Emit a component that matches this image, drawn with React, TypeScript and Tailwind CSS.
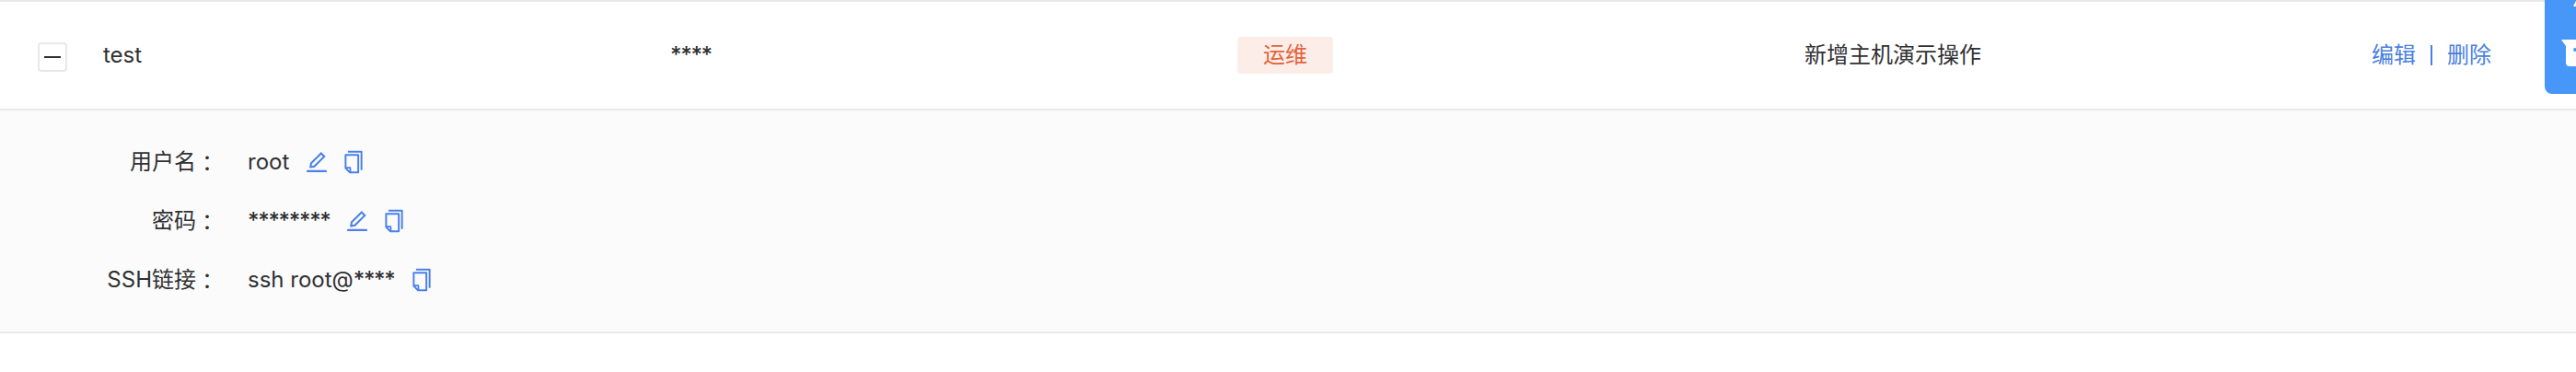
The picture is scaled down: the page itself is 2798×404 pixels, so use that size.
import React from "react";
import { AiOutlineCopy, AiOutlineEdit } from "react-icons/ai";

type Detail = { label: string; value: string; masked: string; editable: boolean };

const details: Detail[] = [
  { label: "用户名", value: "root", masked: "", editable: true },
  { label: "密码", value: "", masked: "********", editable: true },
  { label: "SSH链接", value: "ssh root@", masked: "****", editable: false },
];

function Masked({ children }: { children: string }) {
  return <span className="font-medium tracking-[-1.3px]">{children}</span>;
}

function DetailRow({ label, value, masked, editable }: Detail) {
  return (
    <div className="flex h-16 items-center">
      <div className="flex w-[237px] justify-end whitespace-nowrap">
        <span>{label}</span>
        <span className="font-['Noto_Sans_CJK_TC',sans-serif]">{"\uFF1A"}</span>
      </div>
      <span className="ml-8 whitespace-nowrap">
        {value}
        {masked && <Masked>{masked}</Masked>}
      </span>
      <span className="ml-[15.5px] flex gap-3 text-[28px] text-[#4a80ec]">
        {editable && <AiOutlineEdit />}
        <AiOutlineCopy />
      </span>
    </div>
  );
}

export default function App() {
  return (
    <div className="relative h-[404px] w-full overflow-hidden bg-white font-['Inter','Noto_Sans_CJK_SC',sans-serif] text-[24px] leading-[36px] text-[#303133]">
      <div className="flex h-[120px] items-center border-y-2 border-[#e8e8e8]">
        <div className="flex w-[112px] pl-[41px] pt-1">
          <button className="flex size-8 items-center justify-center rounded-[4px] border-2 border-[#e8e8e8] bg-white">
            <span className="h-0.5 w-[18px] bg-[#303133]" />
          </button>
        </div>
        <div className="w-[616px]">test</div>
        <div className="w-[616px]">
          <Masked>****</Masked>
        </div>
        <div className="w-[616px]">
          <span className="flex h-10 w-[104px] items-center justify-center rounded-[4px] bg-[#fdede8] text-[#e2643c]">运维</span>
        </div>
        <div className="w-[616px]">新增主机演示操作</div>
        <div className="flex items-center whitespace-nowrap text-[#4a80e0]">
          <span>编辑</span>
          <span className="mx-4 h-[22px] w-0.5 bg-[#4a80e0]" />
          <span>删除</span>
        </div>
      </div>
      <div className="h-[242px] border-b-2 border-[#e8e8e8] bg-[#fbfbfb] pt-6">
        {details.map((d) => (
          <DetailRow key={d.label} {...d} />
        ))}
      </div>
      <div className="absolute right-0 top-0 h-[102px] w-[34px] overflow-hidden rounded-bl-[8px] bg-[#4797f8]">
        <svg viewBox="0 0 34 102" className="h-full w-full" fill="#fff">
          <path d="M34 1L31 7H34Z" />
          <path d="M18 43H34V72H27Q23 72 23 68V50Z" />
          <circle cx="33" cy="54" r="2" fill="#4797f8" />
        </svg>
      </div>
    </div>
  );
}
